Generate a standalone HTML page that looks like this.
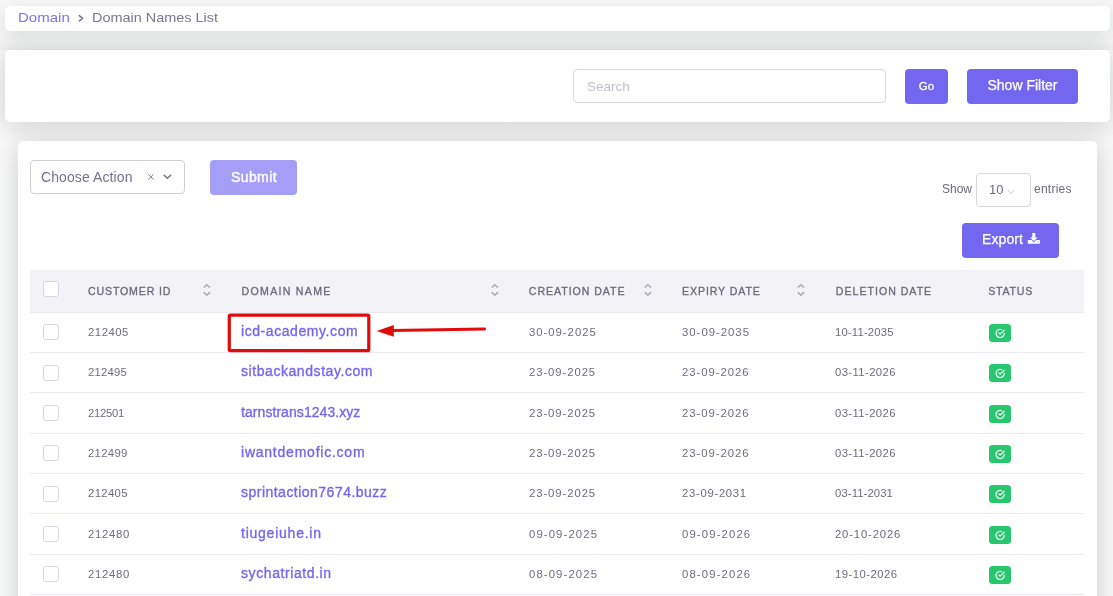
<!DOCTYPE html>
<html><head><meta charset="utf-8">
<style>
*{box-sizing:border-box;margin:0;padding:0}
html,body{width:1113px;height:596px;overflow:hidden}body{will-change:transform}
body{background:#f8f8f8;font-family:"Liberation Sans",sans-serif;position:relative;color:#6e6b7b}
.card{position:absolute;background:#fff;border-radius:5px;box-shadow:0 4px 24px 0 rgba(34,41,47,.2)}
#bc{left:5px;top:6px;width:1105px;height:24.5px;box-shadow:0 6px 20px 0 rgba(34,41,47,.16)}
#flt{left:5px;top:50px;width:1105px;height:72px}
#main{left:18px;top:141px;width:1079px;height:500px}
.abs{position:absolute;white-space:nowrap}
.crumb1{left:18px;top:10px;font-size:13px;color:#7d72f2;transform:scaleX(1.155);transform-origin:0 0}
.crumbsep{left:77px;top:11px;font-size:12px;color:#6e6b7b}
.crumb2{left:92px;top:10px;font-size:13px;color:#7a778a;transform:scaleX(1.11);transform-origin:0 0}
.search{left:573px;top:69px;width:313px;height:34px;border:1px solid #d8d6de;border-radius:4px;font-size:13.5px;color:#c3c2cb;padding:8.5px 13px}
.btn{position:absolute;background:#7367f0;color:#fff;border-radius:4px;text-align:center;white-space:nowrap}
.sel{left:30px;top:160px;width:155px;height:34px;border:1px solid #cfcfd3;border-radius:4px}
.thead{position:absolute;left:30px;top:270px;width:1054px;height:43px;background:#f3f2f7;border-bottom:1px solid #ebe9f1}
.th{position:absolute;top:15.3px;font-size:10.6px;letter-spacing:.6px;color:#6b687c;-webkit-text-stroke:.3px #6b687c;white-space:nowrap}
.srt{position:absolute;top:13.6px}
.row{position:absolute;left:30px;width:1054px;height:40.33px;border-bottom:1px solid #ebe9f1;font-size:11.3px;color:#6e6b7b;letter-spacing:.55px}
.row span{position:absolute;top:13.4px;white-space:nowrap}
.cb{position:absolute;left:13px;top:11.6px;width:16px;height:16px;border:1px solid #d8d6de;border-radius:3px;background:#fff}
.c1{left:58px;letter-spacing:.05px}
.c2{left:211px;color:#7367f0;font-size:14px;top:10.4px!important;-webkit-text-stroke:.35px #7367f0;letter-spacing:.57px}
.c3{left:499px}
.c4{left:652px}
.c5{left:805px}
.row span.c6{left:959px;top:11.5px;line-height:0}
</style></head>
<body>
<div class="card" id="bc"></div>
<div class="abs crumb1">Domain</div>
<svg class="abs" style="left:77px;top:13px" width="10" height="10" viewBox="0 0 10 10"><path d="M2.3 2.6L5.6 5.3 2.3 8" fill="none" stroke="#6e6b7b" stroke-width="1.4" stroke-linecap="round" stroke-linejoin="round"/></svg>
<div class="abs crumb2">Domain Names List</div>

<div class="card" id="flt"></div>
<div class="abs search">Search</div>
<div class="btn" style="left:905px;top:69px;width:43px;height:34.5px;font-size:11.5px;line-height:35px;-webkit-text-stroke:.3px #fff;padding-left:0;letter-spacing:.2px">Go</div>
<div class="btn" style="left:967px;top:69px;width:111px;height:34.5px;font-size:14px;line-height:33.5px;-webkit-text-stroke:.25px #fff">Show Filter</div>

<div class="abs" style="left:0;top:31px;width:1113px;height:19px;background:linear-gradient(rgba(255,255,255,.17),rgba(255,255,255,0) 50%,rgba(0,0,0,.03))"></div>
<div class="abs" style="left:0;top:122px;width:1113px;height:19px;background:linear-gradient(rgba(255,255,255,.12),rgba(255,255,255,0) 50%,rgba(0,0,0,0))"></div>
<div class="card" id="main"></div>
<div class="abs sel"></div>
<div class="abs" style="left:41px;top:169px;font-size:14px;color:#74718a;letter-spacing:.1px">Choose Action</div>
<svg class="abs" style="left:146px;top:172px" width="10" height="10" viewBox="0 0 10 10"><path d="M2.3 2.3L7.5 7.5M7.5 2.3L2.3 7.5" stroke="#7d7d7d" stroke-width=".95"/></svg>
<svg class="abs" style="left:162px;top:173px" width="10" height="8" viewBox="0 0 10 8"><path d="M2.2 2.2L5.4 5.3 8.6 2.2" fill="none" stroke="#7b7b7b" stroke-width="1.6" stroke-linecap="round" stroke-linejoin="round"/></svg>
<div class="btn" style="left:210px;top:160px;width:87px;height:35px;font-size:14px;line-height:35px;background:#a59ef6;-webkit-text-stroke:.35px #fff;letter-spacing:.4px;padding-left:1px">Submit</div>

<div class="abs" style="left:942px;top:182px;font-size:12px;color:#6e6b7b">Show</div>
<div class="abs" style="left:976px;top:173px;width:55px;height:34px;border:1px solid #d8d6de;border-radius:4px"></div>
<div class="abs" style="left:989px;top:182px;font-size:13px;color:#6e6b7b">10</div>
<svg class="abs" style="left:1006px;top:188px" width="10" height="8" viewBox="0 0 10 8"><path d="M2 2.5L5 5.5 8 2.5" fill="none" stroke="#c9c7d0" stroke-width="1" stroke-linecap="round"/></svg>
<div class="abs" style="left:1034px;top:182px;font-size:12px;color:#6e6b7b;letter-spacing:.25px">entries</div>

<div class="btn" style="left:962px;top:223px;width:97px;height:35px;font-size:14px;line-height:33px;-webkit-text-stroke:.25px #fff;text-align:left;padding-left:20px;letter-spacing:.1px">Export</div>
<svg class="abs" style="left:1027px;top:232px" width="14" height="13" viewBox="0 0 14 13"><path d="M5.3 1h3v4.6h2.2L6.8 9.2 3 5.6h2.3z" fill="#fff"/><path d="M.8 8.1h3.6l2.4 2.3 2.4-2.3h3.7v3.6H.8z" fill="#fff"/><circle cx="10.2" cy="10" r=".45" fill="#9d94f5"/><circle cx="11.6" cy="10" r=".45" fill="#9d94f5"/></svg>

<div class="thead">
<div class="cb" style="top:11px"></div>
<span class="th" style="left:58.00px;letter-spacing:0.840px">CUSTOMER ID</span><span class="srt" style="left:173px"><svg width="8" height="14" viewBox="0 0 8 14" style="display:block"><path d="M1.2 3.1L3.9 .7 6.6 3.1M1.2 8.6L3.9 11.1 6.6 8.6" fill="none" stroke="#adabb9" stroke-width="1.5" stroke-linecap="round" stroke-linejoin="round"/></svg></span>
<span class="th" style="left:211.60px;letter-spacing:1.280px">DOMAIN NAME</span><span class="srt" style="left:461px"><svg width="8" height="14" viewBox="0 0 8 14" style="display:block"><path d="M1.2 3.1L3.9 .7 6.6 3.1M1.2 8.6L3.9 11.1 6.6 8.6" fill="none" stroke="#adabb9" stroke-width="1.5" stroke-linecap="round" stroke-linejoin="round"/></svg></span>
<span class="th" style="left:498.80px;letter-spacing:0.950px">CREATION DATE</span><span class="srt" style="left:614.3px"><svg width="8" height="14" viewBox="0 0 8 14" style="display:block"><path d="M1.2 3.1L3.9 .7 6.6 3.1M1.2 8.6L3.9 11.1 6.6 8.6" fill="none" stroke="#adabb9" stroke-width="1.5" stroke-linecap="round" stroke-linejoin="round"/></svg></span>
<span class="th" style="left:652.00px;letter-spacing:0.900px">EXPIRY DATE</span><span class="srt" style="left:767.3px"><svg width="8" height="14" viewBox="0 0 8 14" style="display:block"><path d="M1.2 3.1L3.9 .7 6.6 3.1M1.2 8.6L3.9 11.1 6.6 8.6" fill="none" stroke="#adabb9" stroke-width="1.5" stroke-linecap="round" stroke-linejoin="round"/></svg></span>
<span class="th" style="left:805.80px;letter-spacing:1.000px">DELETION DATE</span>
<span class="th" style="left:958.20px;letter-spacing:0.760px">STATUS</span>
</div>
<div class="row" style="top:312.60px"><div class="cb"></div><span class="c1" style="letter-spacing:0.530px">212405</span><span class="c2" style="letter-spacing:0.570px">icd-academy.com</span><span class="c3" style="letter-spacing:0.994px">30-09-2025</span><span class="c4" style="letter-spacing:1.016px">30-09-2035</span><span class="c5" style="letter-spacing:0.173px">10-11-2035</span><span class="c6"><svg width="22" height="18" viewBox="0 0 22 18"><rect width="22" height="18" rx="3.5" fill="#28c76f"/><g transform="translate(11.1 9.4) scale(.41) translate(-12 -12)" fill="none" stroke="#fff" stroke-width="2.7" stroke-linecap="round" stroke-linejoin="round"><path d="M22 11.08V12a10 10 0 1 1-5.93-9.14"/><polyline points="22 4 12 14.01 9 11.01"/></g></svg></span></div>
<div class="row" style="top:352.93px"><div class="cb"></div><span class="c1" style="letter-spacing:0.210px">212495</span><span class="c2" style="letter-spacing:0.564px">sitbackandstay.com</span><span class="c3" style="letter-spacing:0.928px">23-09-2025</span><span class="c4" style="letter-spacing:0.972px">23-09-2026</span><span class="c5" style="letter-spacing:0.395px">03-11-2026</span><span class="c6"><svg width="22" height="18" viewBox="0 0 22 18"><rect width="22" height="18" rx="3.5" fill="#28c76f"/><g transform="translate(11.1 9.4) scale(.41) translate(-12 -12)" fill="none" stroke="#fff" stroke-width="2.7" stroke-linecap="round" stroke-linejoin="round"><path d="M22 11.08V12a10 10 0 1 1-5.93-9.14"/><polyline points="22 4 12 14.01 9 11.01"/></g></svg></span></div>
<div class="row" style="top:393.26px"><div class="cb"></div><span class="c1" style="letter-spacing:-0.270px">212501</span><span class="c2" style="letter-spacing:0.064px">tarnstrans1243.xyz</span><span class="c3" style="letter-spacing:0.928px">23-09-2025</span><span class="c4" style="letter-spacing:0.972px">23-09-2026</span><span class="c5" style="letter-spacing:0.395px">03-11-2026</span><span class="c6"><svg width="22" height="18" viewBox="0 0 22 18"><rect width="22" height="18" rx="3.5" fill="#28c76f"/><g transform="translate(11.1 9.4) scale(.41) translate(-12 -12)" fill="none" stroke="#fff" stroke-width="2.7" stroke-linecap="round" stroke-linejoin="round"><path d="M22 11.08V12a10 10 0 1 1-5.93-9.14"/><polyline points="22 4 12 14.01 9 11.01"/></g></svg></span></div>
<div class="row" style="top:433.59px"><div class="cb"></div><span class="c1" style="letter-spacing:0.330px">212499</span><span class="c2" style="letter-spacing:0.770px">iwantdemofic.com</span><span class="c3" style="letter-spacing:0.928px">23-09-2025</span><span class="c4" style="letter-spacing:0.972px">23-09-2026</span><span class="c5" style="letter-spacing:0.395px">03-11-2026</span><span class="c6"><svg width="22" height="18" viewBox="0 0 22 18"><rect width="22" height="18" rx="3.5" fill="#28c76f"/><g transform="translate(11.1 9.4) scale(.41) translate(-12 -12)" fill="none" stroke="#fff" stroke-width="2.7" stroke-linecap="round" stroke-linejoin="round"><path d="M22 11.08V12a10 10 0 1 1-5.93-9.14"/><polyline points="22 4 12 14.01 9 11.01"/></g></svg></span></div>
<div class="row" style="top:473.92px"><div class="cb"></div><span class="c1" style="letter-spacing:0.370px">212405</span><span class="c2" style="letter-spacing:0.480px">sprintaction7674.buzz</span><span class="c3" style="letter-spacing:0.928px">23-09-2025</span><span class="c4" style="letter-spacing:0.705px">23-09-2031</span><span class="c5" style="letter-spacing:0.105px">03-11-2031</span><span class="c6"><svg width="22" height="18" viewBox="0 0 22 18"><rect width="22" height="18" rx="3.5" fill="#28c76f"/><g transform="translate(11.1 9.4) scale(.41) translate(-12 -12)" fill="none" stroke="#fff" stroke-width="2.7" stroke-linecap="round" stroke-linejoin="round"><path d="M22 11.08V12a10 10 0 1 1-5.93-9.14"/><polyline points="22 4 12 14.01 9 11.01"/></g></svg></span></div>
<div class="row" style="top:514.25px"><div class="cb"></div><span class="c1" style="letter-spacing:0.730px">212480</span><span class="c2" style="letter-spacing:0.761px">tiugeiuhe.in</span><span class="c3" style="letter-spacing:1.128px">09-09-2025</span><span class="c4" style="letter-spacing:1.150px">09-09-2026</span><span class="c5" style="letter-spacing:0.839px">20-10-2026</span><span class="c6"><svg width="22" height="18" viewBox="0 0 22 18"><rect width="22" height="18" rx="3.5" fill="#28c76f"/><g transform="translate(11.1 9.4) scale(.41) translate(-12 -12)" fill="none" stroke="#fff" stroke-width="2.7" stroke-linecap="round" stroke-linejoin="round"><path d="M22 11.08V12a10 10 0 1 1-5.93-9.14"/><polyline points="22 4 12 14.01 9 11.01"/></g></svg></span></div>
<div class="row" style="top:554.58px"><div class="cb"></div><span class="c1" style="letter-spacing:0.730px">212480</span><span class="c2" style="letter-spacing:0.585px">sychatriatd.in</span><span class="c3" style="letter-spacing:1.128px">08-09-2025</span><span class="c4" style="letter-spacing:1.150px">08-09-2026</span><span class="c5" style="letter-spacing:0.483px">19-10-2026</span><span class="c6"><svg width="22" height="18" viewBox="0 0 22 18"><rect width="22" height="18" rx="3.5" fill="#28c76f"/><g transform="translate(11.1 9.4) scale(.41) translate(-12 -12)" fill="none" stroke="#fff" stroke-width="2.7" stroke-linecap="round" stroke-linejoin="round"><path d="M22 11.08V12a10 10 0 1 1-5.93-9.14"/><polyline points="22 4 12 14.01 9 11.01"/></g></svg></span></div>

<svg class="abs" style="left:0;top:0" width="1113" height="596"><rect x="229.25" y="315.15" width="139.55" height="35.55" rx="1.2" fill="none" stroke="#e00b0b" stroke-width="3.2"/></svg>
<svg class="abs" style="left:370px;top:318px" width="120" height="24" viewBox="0 0 120 24"><path d="M22 12.5L114.5 11" stroke="#e00b0b" stroke-width="3" stroke-linecap="round"/><path d="M6.7 12.9L23.8 6.9V18.7z" fill="#e00b0b"/></svg>
</body></html>
